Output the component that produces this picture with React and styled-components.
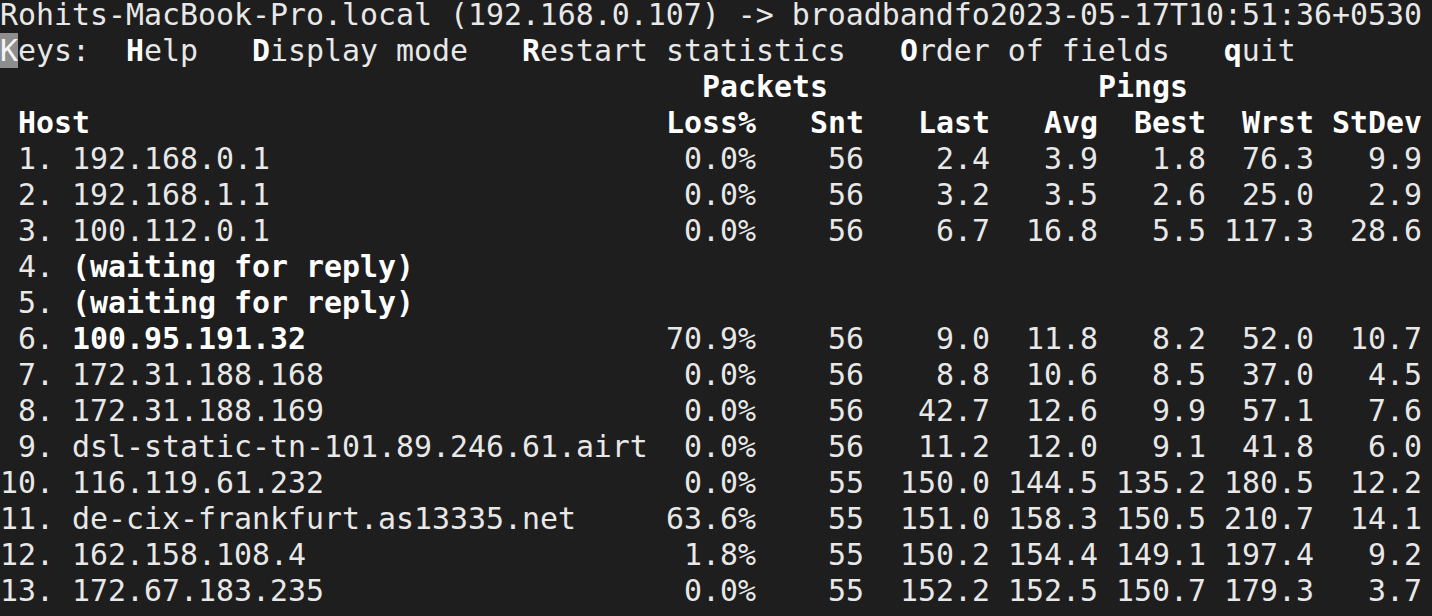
import React from 'react'
import styled, { createGlobalStyle } from 'styled-components'

const CH = 18

const GlobalStyle = createGlobalStyle`
  html, body {
    margin: 0;
    padding: 0;
    background: #1e1e1e;
  }
`

const Terminal = styled.div`
  width: 1432px;
  height: 616px;
  overflow: hidden;
  background: #1e1e1e;
  color: #e8e8e8;
  font-family: "DejaVu Sans Mono", "Liberation Mono", monospace;
  font-size: 29.9px;
  line-height: 36px;
  white-space: pre;
  .screen {
    margin-top: -3px;
    display: flex;
    flex-direction: column;
  }
`

const TitleLine = styled.div`
  display: flex;
  justify-content: space-between;
  width: ${CH * 79}px;
`

const KeysLine = styled.div`
  display: flex;
`

const KeyItem = styled.span`
  margin-left: ${p => p.gap * CH}px;
  b {
    font-weight: bold;
    color: #fff;
  }
`

const Cursor = styled.span`
  background: #8e8e8e;
  color: #f4f4f4;
`

const Row = styled.div`
  display: grid;
  grid-template-columns: ${[35, 7, 6, 7, 6, 6, 6, 6].map(n => n * CH + 'px').join(' ')};
  font-weight: ${p => (p.bold ? 'bold' : 'normal')};
  color: ${p => (p.bold ? '#fff' : 'inherit')};
`

const GroupTitle = styled.div`
  grid-column: ${p => p.span};
  padding-left: ${p => p.pad * CH}px;
`

const HostCell = styled.div`
  padding-left: ${p => (p.header ? CH : 0)}px;
`

const HopNo = styled.span`
  display: inline-block;
  width: ${CH * 3}px;
  text-align: right;
  margin-right: ${CH}px;
`

const HostName = styled.span`
  font-weight: ${p => (p.bold ? 'bold' : 'normal')};
  color: ${p => (p.bold ? '#fff' : 'inherit')};
`

const Num = styled.div`
  text-align: right;
`

const hops = [
  ['192.168.0.1', '0.0%', '56', '2.4', '3.9', '1.8', '76.3', '9.9'],
  ['192.168.1.1', '0.0%', '56', '3.2', '3.5', '2.6', '25.0', '2.9'],
  ['100.112.0.1', '0.0%', '56', '6.7', '16.8', '5.5', '117.3', '28.6'],
  ['(waiting for reply)'],
  ['(waiting for reply)'],
  ['100.95.191.32', '70.9%', '56', '9.0', '11.8', '8.2', '52.0', '10.7'],
  ['172.31.188.168', '0.0%', '56', '8.8', '10.6', '8.5', '37.0', '4.5'],
  ['172.31.188.169', '0.0%', '56', '42.7', '12.6', '9.9', '57.1', '7.6'],
  ['dsl-static-tn-101.89.246.61.airt', '0.0%', '56', '11.2', '12.0', '9.1', '41.8', '6.0'],
  ['116.119.61.232', '0.0%', '55', '150.0', '144.5', '135.2', '180.5', '12.2'],
  ['de-cix-frankfurt.as13335.net', '63.6%', '55', '151.0', '158.3', '150.5', '210.7', '14.1'],
  ['162.158.108.4', '1.8%', '55', '150.2', '154.4', '149.1', '197.4', '9.2'],
  ['172.67.183.235', '0.0%', '55', '152.2', '152.5', '150.7', '179.3', '3.7'],
]

const keys = [
  ['H', 'elp', 2],
  ['D', 'isplay mode', 3],
  ['R', 'estart statistics', 3],
  ['O', 'rder of fields', 3],
  ['q', 'uit', 3],
]

const columns = ['Loss%', 'Snt', 'Last', 'Avg', 'Best', 'Wrst', 'StDev']

export default function App() {
  return (
    <Terminal>
      <GlobalStyle />
      <div className="screen">
        <TitleLine>
          <span>Rohits-MacBook-Pro.local (192.168.0.107) -&gt; broadbandfo</span>
          <span>2023-05-17T10:51:36+0530</span>
        </TitleLine>

        <KeysLine>
          <span><Cursor>K</Cursor>eys:</span>
          {keys.map(([k, rest, gap]) => (
            <KeyItem key={k} gap={gap}><b>{k}</b>{rest}</KeyItem>
          ))}
        </KeysLine>

        <Row bold>
          <div />
          <GroupTitle span="2 / 4" pad={4}>Packets</GroupTitle>
          <GroupTitle span="4 / 9" pad={13}>Pings</GroupTitle>
        </Row>

        <Row bold>
          <HostCell header>Host</HostCell>
          {columns.map(c => <Num key={c}>{c}</Num>)}
        </Row>

        {hops.map(([host, ...stats], i) => (
          <Row key={i}>
            <HostCell>
              <HopNo>{i + 1}.</HopNo>
              <HostName bold={stats.length === 0 || i === 5}>{host}</HostName>
            </HostCell>
            {stats.map((s, j) => <Num key={j}>{s}</Num>)}
          </Row>
        ))}
      </div>
    </Terminal>
  )
}
